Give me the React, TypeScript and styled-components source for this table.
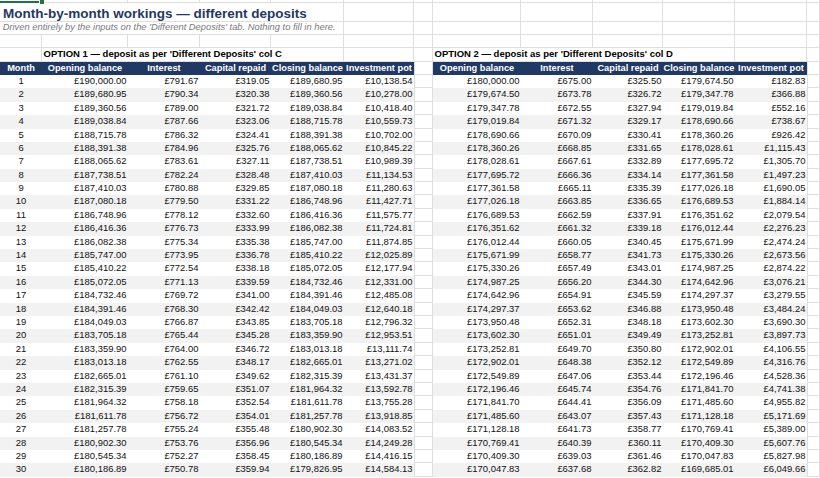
import React from 'react';
import styled, { createGlobalStyle, css } from 'styled-components';

const GRID = '#dedede';
const NAVY = '#1f3864';
const STRIPE = '#f2f2f2';
const COLS = '42px 86px 72px 71px 73px 70px 19px 88px 72px 70px 72px 72px 1fr';

const GlobalStyle = createGlobalStyle`
  html, body { margin: 0; padding: 0; background: #ffffff; }
  body {
    font-family: "Liberation Sans", Arial, sans-serif;
  }
`;

const Sheet = styled.div`
  width: 820px;
  height: 478px;
  overflow: hidden;
  background: #fff;
  color: #111;
`;

const Row = styled.div<{ $h: number }>`
  display: grid;
  grid-template-columns: ${COLS};
  height: ${(p) => p.$h}px;
`;

const Blank = styled.div<{ $lead?: boolean }>`
  box-sizing: border-box;
  border-right: 1px solid ${GRID};
  border-bottom: 1px solid ${GRID};
  ${(p) => p.$lead && css`box-shadow: inset 1px 0 0 ${GRID};`}
`;

const Selected = styled(Blank)`
  position: relative;
  border-bottom: 2px solid #217346;
  &::after {
    content: '';
    position: absolute;
    right: -3px;
    bottom: -3px;
    width: 4px;
    height: 4px;
    background: #217346;
    box-shadow: 0 0 0 1px #fff;
  }
`;

const TextCell = styled.div<{ $span?: number }>`
  box-sizing: border-box;
  grid-column: span ${(p) => p.$span ?? 1};
  border-right: 1px solid ${GRID};
  border-bottom: 1px solid ${GRID};
  white-space: nowrap;
  overflow: visible;
`;

const TitleCell = styled(TextCell)`
  font-size: 13.5px;
  font-weight: 700;
  color: ${NAVY};
  line-height: 15px;
  padding: 3.4px 0 0 3px;
`;

const SubtitleCell = styled(TextCell)`
  font-size: 9.35px;
  font-style: italic;
  color: #7a7a7a;
  line-height: 12.2px;
  padding-left: 2.7px;
`;

const OptionCell = styled(TextCell)`
  font-size: 9.5px;
  font-weight: 700;
  color: #000;
  line-height: 12.6px;
  padding-left: 1.5px;
`;

const HeadCell = styled.div`
  background: ${NAVY};
  color: #fff;
  font-size: 9.25px;
  font-weight: 700;
  line-height: 12.8px;
  text-align: center;
  white-space: nowrap;
  overflow: visible;
`;

const DataCell = styled.div<{ $stripe: boolean; $align: 'center' | 'right' }>`
  background: ${(p) => (p.$stripe ? STRIPE : '#ffffff')};
  font-size: 9.45px;
  line-height: 12.4px;
  color: #111;
  text-align: ${(p) => p.$align};
  padding-right: ${(p) => (p.$align === 'right' ? '1.5px' : '0')};
  white-space: nowrap;
`;

const opt1: string[][] = [
  ['£190,000.00', '£791.67', '£319.05', '£189,680.95', '£10,138.54'],
  ['£189,680.95', '£790.34', '£320.38', '£189,360.56', '£10,278.00'],
  ['£189,360.56', '£789.00', '£321.72', '£189,038.84', '£10,418.40'],
  ['£189,038.84', '£787.66', '£323.06', '£188,715.78', '£10,559.73'],
  ['£188,715.78', '£786.32', '£324.41', '£188,391.38', '£10,702.00'],
  ['£188,391.38', '£784.96', '£325.76', '£188,065.62', '£10,845.22'],
  ['£188,065.62', '£783.61', '£327.11', '£187,738.51', '£10,989.39'],
  ['£187,738.51', '£782.24', '£328.48', '£187,410.03', '£11,134.53'],
  ['£187,410.03', '£780.88', '£329.85', '£187,080.18', '£11,280.63'],
  ['£187,080.18', '£779.50', '£331.22', '£186,748.96', '£11,427.71'],
  ['£186,748.96', '£778.12', '£332.60', '£186,416.36', '£11,575.77'],
  ['£186,416.36', '£776.73', '£333.99', '£186,082.38', '£11,724.81'],
  ['£186,082.38', '£775.34', '£335.38', '£185,747.00', '£11,874.85'],
  ['£185,747.00', '£773.95', '£336.78', '£185,410.22', '£12,025.89'],
  ['£185,410.22', '£772.54', '£338.18', '£185,072.05', '£12,177.94'],
  ['£185,072.05', '£771.13', '£339.59', '£184,732.46', '£12,331.00'],
  ['£184,732.46', '£769.72', '£341.00', '£184,391.46', '£12,485.08'],
  ['£184,391.46', '£768.30', '£342.42', '£184,049.03', '£12,640.18'],
  ['£184,049.03', '£766.87', '£343.85', '£183,705.18', '£12,796.32'],
  ['£183,705.18', '£765.44', '£345.28', '£183,359.90', '£12,953.51'],
  ['£183,359.90', '£764.00', '£346.72', '£183,013.18', '£13,111.74'],
  ['£183,013.18', '£762.55', '£348.17', '£182,665.01', '£13,271.02'],
  ['£182,665.01', '£761.10', '£349.62', '£182,315.39', '£13,431.37'],
  ['£182,315.39', '£759.65', '£351.07', '£181,964.32', '£13,592.78'],
  ['£181,964.32', '£758.18', '£352.54', '£181,611.78', '£13,755.28'],
  ['£181,611.78', '£756.72', '£354.01', '£181,257.78', '£13,918.85'],
  ['£181,257.78', '£755.24', '£355.48', '£180,902.30', '£14,083.52'],
  ['£180,902.30', '£753.76', '£356.96', '£180,545.34', '£14,249.28'],
  ['£180,545.34', '£752.27', '£358.45', '£180,186.89', '£14,416.15'],
  ['£180,186.89', '£750.78', '£359.94', '£179,826.95', '£14,584.13'],
];

const opt2: string[][] = [
  ['£180,000.00', '£675.00', '£325.50', '£179,674.50', '£182.83'],
  ['£179,674.50', '£673.78', '£326.72', '£179,347.78', '£366.88'],
  ['£179,347.78', '£672.55', '£327.94', '£179,019.84', '£552.16'],
  ['£179,019.84', '£671.32', '£329.17', '£178,690.66', '£738.67'],
  ['£178,690.66', '£670.09', '£330.41', '£178,360.26', '£926.42'],
  ['£178,360.26', '£668.85', '£331.65', '£178,028.61', '£1,115.43'],
  ['£178,028.61', '£667.61', '£332.89', '£177,695.72', '£1,305.70'],
  ['£177,695.72', '£666.36', '£334.14', '£177,361.58', '£1,497.23'],
  ['£177,361.58', '£665.11', '£335.39', '£177,026.18', '£1,690.05'],
  ['£177,026.18', '£663.85', '£336.65', '£176,689.53', '£1,884.14'],
  ['£176,689.53', '£662.59', '£337.91', '£176,351.62', '£2,079.54'],
  ['£176,351.62', '£661.32', '£339.18', '£176,012.44', '£2,276.23'],
  ['£176,012.44', '£660.05', '£340.45', '£175,671.99', '£2,474.24'],
  ['£175,671.99', '£658.77', '£341.73', '£175,330.26', '£2,673.56'],
  ['£175,330.26', '£657.49', '£343.01', '£174,987.25', '£2,874.22'],
  ['£174,987.25', '£656.20', '£344.30', '£174,642.96', '£3,076.21'],
  ['£174,642.96', '£654.91', '£345.59', '£174,297.37', '£3,279.55'],
  ['£174,297.37', '£653.62', '£346.88', '£173,950.48', '£3,484.24'],
  ['£173,950.48', '£652.31', '£348.18', '£173,602.30', '£3,690.30'],
  ['£173,602.30', '£651.01', '£349.49', '£173,252.81', '£3,897.73'],
  ['£173,252.81', '£649.70', '£350.80', '£172,902.01', '£4,106.55'],
  ['£172,902.01', '£648.38', '£352.12', '£172,549.89', '£4,316.76'],
  ['£172,549.89', '£647.06', '£353.44', '£172,196.46', '£4,528.36'],
  ['£172,196.46', '£645.74', '£354.76', '£171,841.70', '£4,741.38'],
  ['£171,841.70', '£644.41', '£356.09', '£171,485.60', '£4,955.82'],
  ['£171,485.60', '£643.07', '£357.43', '£171,128.18', '£5,171.69'],
  ['£171,128.18', '£641.73', '£358.77', '£170,769.41', '£5,389.00'],
  ['£170,769.41', '£640.39', '£360.11', '£170,409.30', '£5,607.76'],
  ['£170,409.30', '£639.03', '£361.46', '£170,047.83', '£5,827.98'],
  ['£170,047.83', '£637.68', '£362.82', '£169,685.01', '£6,049.66'],
];

const H = 13.4;

const blanks = (n: number, key: string) =>
  Array.from({ length: n }, (_, i) => <Blank key={`${key}${i}`} />);

const head1 = ['Month', 'Opening balance', 'Interest', 'Capital repaid', 'Closing balance', 'Investment pot'];
const head2 = ['Opening balance', 'Interest', 'Capital repaid', 'Closing balance', 'Investment pot'];

export default function App() {
  return (
    <>
      <GlobalStyle />
      <Sheet>
        <Row $h={3}>
          <Selected />
          {blanks(12, 's')}
        </Row>
        <Row $h={18.4}>
          <TitleCell $span={5}>Month-by-month workings — different deposits</TitleCell>
          {blanks(8, 't')}
        </Row>
        <Row $h={H}>
          <SubtitleCell $span={5}>
            Driven entirely by the inputs on the 'Different Deposits' tab. Nothing to fill in here.
          </SubtitleCell>
          {blanks(8, 'u')}
        </Row>
        <Row $h={H}>{blanks(13, 'e')}</Row>
        <Row $h={H}>
          <Blank />
          <OptionCell $span={4}>OPTION 1 — deposit as per 'Different Deposits' col C</OptionCell>
          <Blank />
          <Blank />
          <OptionCell $span={4}>OPTION 2 — deposit as per 'Different Deposits' col D</OptionCell>
          <Blank />
          <Blank />
        </Row>
        <Row $h={H}>
          {head1.map((h) => (
            <HeadCell key={`a${h}`}>{h}</HeadCell>
          ))}
          <Blank $lead />
          {head2.map((h) => (
            <HeadCell key={`b${h}`}>{h}</HeadCell>
          ))}
          <Blank $lead />
        </Row>
        {opt1.map((r, i) => {
          const stripe = i % 2 === 1;
          return (
            <Row $h={H} key={i}>
              <DataCell $stripe={stripe} $align="center">{i + 1}</DataCell>
              {r.map((v, j) => (
                <DataCell key={`a${j}`} $stripe={stripe} $align="right">{v}</DataCell>
              ))}
              <Blank $lead />
              {opt2[i].map((v, j) => (
                <DataCell key={`b${j}`} $stripe={stripe} $align="right">{v}</DataCell>
              ))}
              <Blank $lead />
            </Row>
          );
        })}
      </Sheet>
    </>
  );
}
